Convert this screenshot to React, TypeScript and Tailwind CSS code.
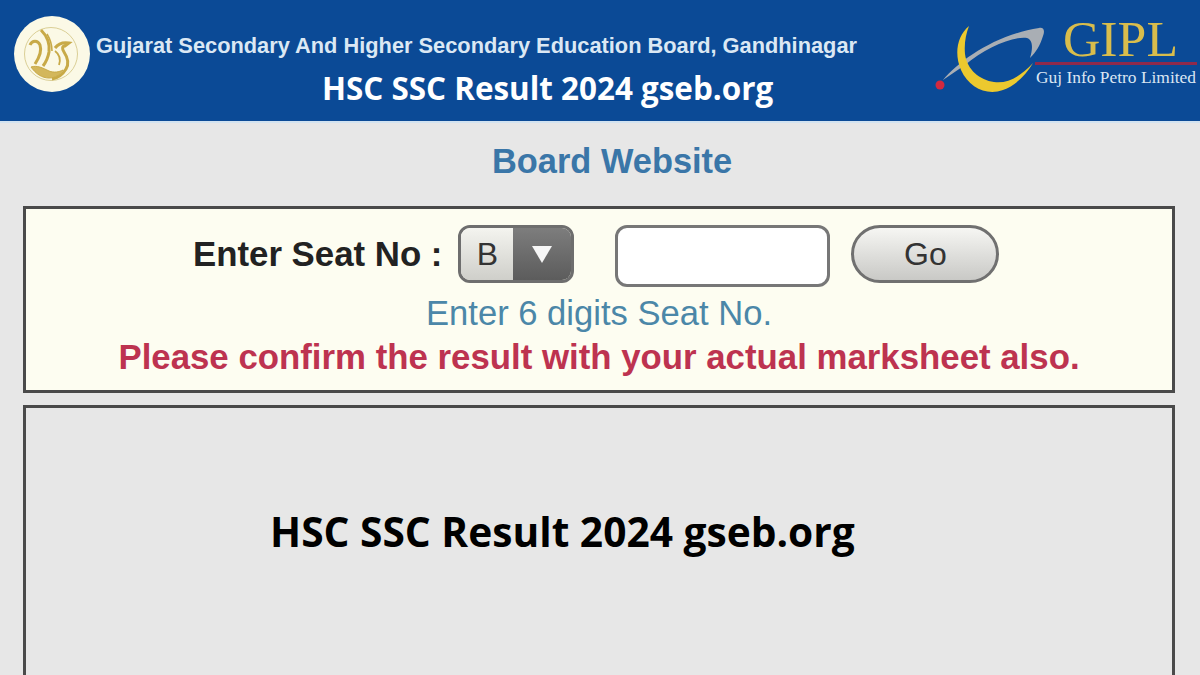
function BoardEmblem() {
  return (
    <div className="w-[76px] h-[76px] rounded-full bg-[#fbf9e6] flex items-center justify-center shrink-0">
      <svg width="60" height="60" viewBox="0 0 60 60" fill="none" stroke="#c8aa48">
        <circle cx="29" cy="30" r="26.5" strokeWidth="0.9" stroke="#d6c98c" />
        <path d="M8 21c2-5 8-5 10 0 2 6-1 13-5 19" strokeWidth="3" />
        <path d="M19 6c6 6 9 14 8 22-1 6-3 10-6 14" strokeWidth="3" />
        <path d="M25 10c3 5 5 10 5 17" strokeWidth="1.6" />
        <path d="M33 24c3-4 8-6 14-5l-4 3c-3 0-3 3-1 6 4 6 5 12 2 17-3 5-8 9-14 10" strokeWidth="3" />
        <path d="M33 27c4 3 6 8 4 14" strokeWidth="1.8" />
        <path d="M9 43c6-2 12 1 18 4 5 2 10 1 14-1-3 5-8 8-14 8-7 0-13-4-18-11z" fill="#d3b75c" strokeWidth="1" />
      </svg>
    </div>
  );
}

function GiplLogo() {
  return (
    <svg width="265" height="100" viewBox="0 0 265 100" className="shrink-0">
      <path d="M8 70C25 50 60 25 104 18c5-1 6 3 4 8-3 10-7 16-13 22 3-10 3-18-3-20-14-2-42 10-62 27z" fill="#a9aeb4" />
      <path d="M34 16C22 26 19 44 26 60c8 18 26 26 42 20 12-4 23-15 30-27-12 13-25 21-39 19-14-2-27-12-29-28-1-11 1-20 4-28z" fill="#ecc92e" />
      <circle cx="5" cy="75" r="4.5" fill="#d3293f" />
      <rect x="100" y="52" width="162" height="3" fill="#8f2a4c" />
      <text x="128" y="46" fontFamily="'Liberation Serif', serif" fontSize="51" fill="#d9bd4c" textLength="115" lengthAdjust="spacingAndGlyphs">GIPL</text>
      <text x="101" y="73" fontFamily="'Liberation Serif', serif" fontSize="16.5" fill="#dbe6f2" textLength="160" lengthAdjust="spacingAndGlyphs">Guj Info Petro Limited</text>
    </svg>
  );
}

export default function App() {
  return (
    <div className="w-[1200px] h-[675px] overflow-hidden bg-[#e7e7e7] flex flex-col font-['Liberation_Sans',sans-serif]">

      {/* Blue header */}
      <header className="h-[123px] shrink-0 bg-[#0b4a96] border-b-2 border-[#d3e3f0] flex pl-[14px] pt-[16px]">
        <BoardEmblem />
        <div className="w-[845px] flex flex-col pl-[6px] shrink-0">
          <div className="mt-[15px] text-[21.8px] leading-[30px] font-bold text-[#dbe8f4] whitespace-nowrap">
            Gujarat Secondary And Higher Secondary Education Board, Gandhinagar
          </div>
          <div className="mt-[6px] pl-[226px] text-[31.4px] leading-[41px] font-bold text-white whitespace-nowrap font-['Open_Sans',sans-serif]">
            HSC SSC Result 2024 gseb.org
          </div>
        </div>
        <div className="-mt-[6px]">
          <GiplLogo />
        </div>
      </header>

      {/* Page body */}
      <main className="flex-1 flex flex-col pl-[23px] pr-[25px] min-h-0">
        <h2 className="mt-[20px] h-[36px] leading-[36px] pl-[469px] text-[34.4px] font-bold text-[#3a76a8] whitespace-nowrap">
          Board Website
        </h2>

        <section className="mt-[27px] h-[187px] border-[3px] border-[#4a4a4a] bg-[#fdfdf1] flex flex-col items-center shrink-0">
          <div className="self-start mt-[16px] pl-[167px] h-[62px] flex items-start">
            <span className="text-[34.8px] leading-[58px] font-bold text-[#222] whitespace-nowrap">Enter Seat No :</span>
            <div className="ml-[16px] w-[116px] h-[58px] border-[3px] border-[#6e6e6e] rounded-[12px] overflow-hidden flex">
              <span className="w-[52px] bg-gradient-to-b from-[#f4f4ef] to-[#cfcfca] flex items-center justify-center text-[32px] text-[#333]">B</span>
              <span className="flex-1 bg-gradient-to-b from-[#7d7d7d] to-[#5c5c5c] flex items-center justify-center">
                <svg width="22" height="19" viewBox="0 0 22 19">
                  <path d="M1 1h20L11 18z" fill="#f6f6f6" />
                </svg>
              </span>
            </div>
            <div className="ml-[41px] w-[215px] h-[62px] border-[3px] border-[#777] rounded-[12px] bg-white" />
            <button className="ml-[21px] w-[148px] h-[58px] border-[3px] border-[#707070] rounded-full bg-gradient-to-b from-[#f6f6f3] to-[#c9c9c6] text-[32px] text-[#333]">
              Go
            </button>
          </div>
          <p className="mt-[4px] h-[44px] leading-[44px] text-[34.6px] text-[#4b87a8] whitespace-nowrap">
            Enter 6 digits Seat No.
          </p>
          <p className="mt-[1px] h-[42px] leading-[42px] text-[34.8px] font-bold text-[#bd3350] whitespace-nowrap">
            Please confirm the result with your actual marksheet also.
          </p>
        </section>

        <section className="mt-[12px] flex-1 border-[3px] border-b-0 border-[#4a4a4a] bg-[#e7e7e7] pt-[96px] pl-[244px]">
          <div className="text-[40.7px] leading-[54px] font-bold text-black whitespace-nowrap font-['Open_Sans',sans-serif]">
            HSC SSC Result 2024 gseb.org
          </div>
        </section>
      </main>
    </div>
  );
}
